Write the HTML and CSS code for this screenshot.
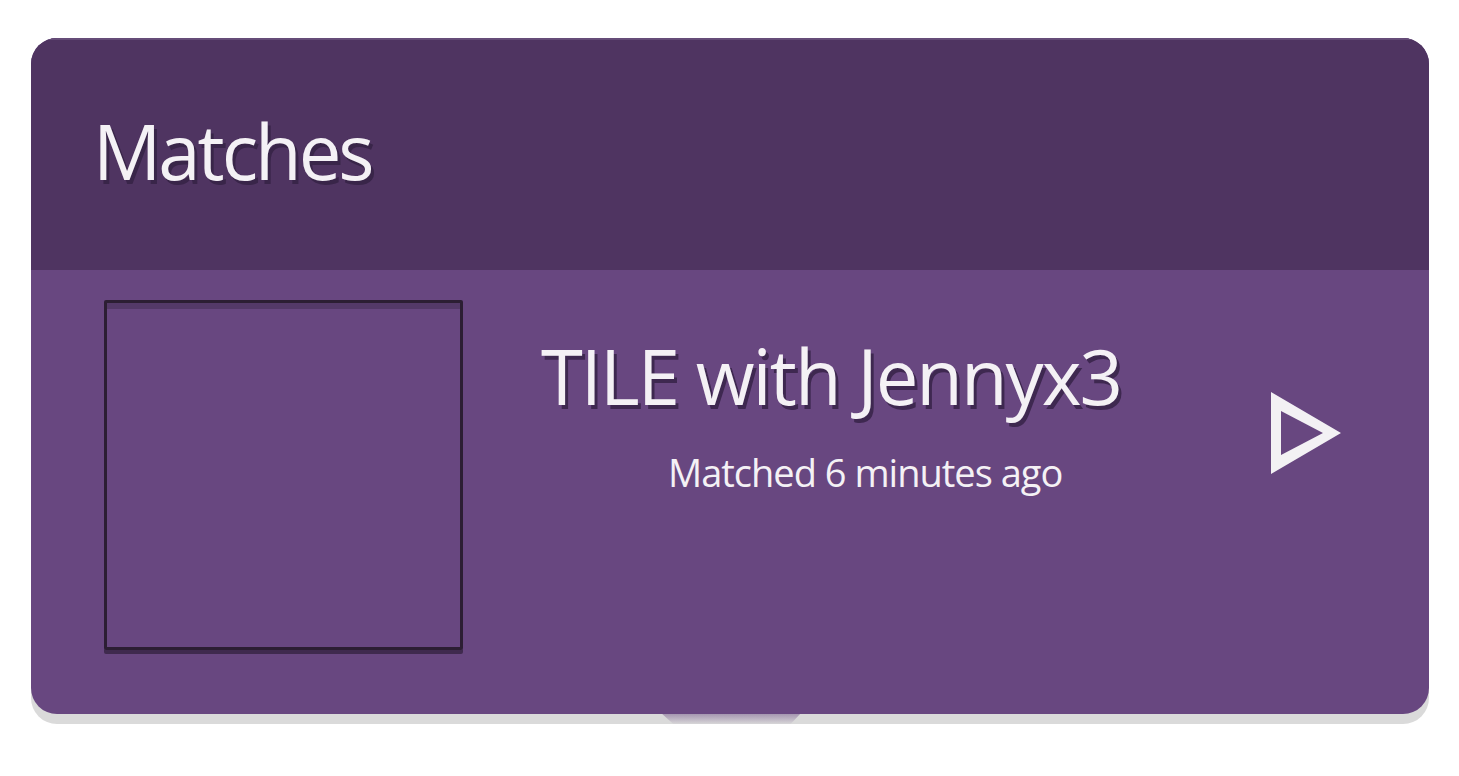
FILE: index.html
```html
<!DOCTYPE html>
<html>
<head>
<meta charset="utf-8">
<link rel="stylesheet" href="styles.css">
</head>
<body>
<div class="card-wrap">
  <div class="card">
    <header class="card-header">
      <h1 class="card-title">Matches</h1>
    </header>
    <section class="match">
      <div class="avatar"></div>
      <div class="match-info">
        <h2 class="match-title">TILE with Jennyx3</h2>
        <p class="match-time">Matched 6 minutes ago</p>
      </div>
      <svg class="play" width="70" height="82" viewBox="0 0 70 82">
        <path d="M0,0 L0,82 L70,41 Z M10,19 L10,63 L52,41 Z" fill="#f3f1f4" fill-rule="evenodd"/>
      </svg>
    </section>
  </div>
  <div class="fold"></div>
</div>
</body>
</html>
```
FILE: styles.css
```css
html, body {
  margin: 0;
  padding: 0;
  background: #ffffff;
}
body {
  padding: 38px 30px 0 31px;
  font-family: "Open Sans", "Noto Sans", sans-serif;
}
.card-wrap {
  position: relative;
  width: 1398px;
  padding-bottom: 10px;
  background: #dadada;
  border-radius: 26px;
}
.card {
  height: 676px;
  border-radius: 26px;
  background: #684780;
  display: flex;
  flex-direction: column;
  overflow: hidden;
}
.card-header {
  height: 232px;
  flex: none;
  background: #4f3461;
  border-top: 2px solid #654c78;
  box-sizing: border-box;
  padding-left: 62px;
  display: flex;
  align-items: flex-start;
}
.card-title {
  margin: 61px 0 0 0;
  color: #f4f1f5;
  font-weight: 400;
  font-size: 76px;
  line-height: 100px;
  letter-spacing: -3px;
  text-shadow: 3px 4px 0 #392549;
}
.match {
  display: flex;
  align-items: flex-start;
  padding: 30px 88px 0 73px;
}
.avatar {
  width: 353px;
  height: 344px;
  border: 3px solid #2c1e33;
  border-radius: 2px;
  box-shadow: 0 4px 0 rgba(50, 32, 62, 0.75), inset 0 7px 0 -1px rgba(60, 40, 75, 0.45);
  flex: none;
}
.match-info {
  margin-left: 78px;
  margin-top: 26px;
  display: flex;
  flex-direction: column;
}
.match-title {
  margin: 0;
  color: #f4f1f5;
  font-weight: 400;
  font-size: 76px;
  line-height: 100px;
  letter-spacing: -2px;
  text-shadow: 3px 4px 0 #3e2850;
}
.match-time {
  margin: 21px 0 0 127px;
  color: #f4f1f5;
  font-size: 38px;
  line-height: 50px;
  letter-spacing: -1px;
}
.play {
  margin-left: auto;
  margin-top: 92px;
  flex: none;
}
.fold {
  position: absolute;
  left: 629px;
  top: 674px;
  width: 142px;
  height: 18px;
  background: linear-gradient(to bottom, rgba(104, 71, 128, 0.55), rgba(218, 218, 218, 0) 70%);
  clip-path: polygon(0 0, 100% 0, 88% 100%, 14% 100%);
}
```
